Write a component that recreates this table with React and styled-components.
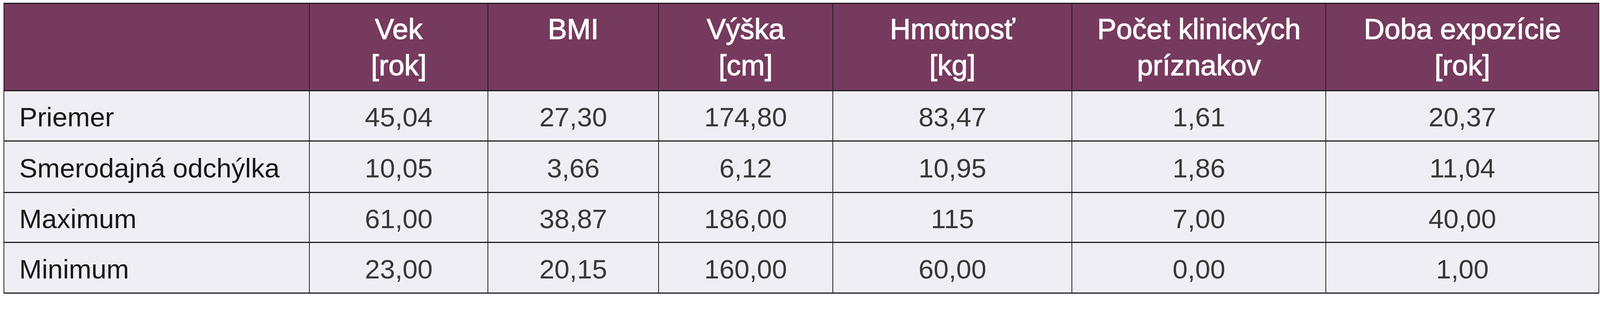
import React from 'react';
import styled, { createGlobalStyle } from 'styled-components';

// sizes are measured on a 4253px wide page; keep them relative to the viewport width
const u = (px) => `${((px / 4253) * 100).toFixed(4)}vw`;

const GlobalStyle = createGlobalStyle`
  body {
    margin: 0;
    background: #ffffff;
    font-family: "Liberation Sans", Arial, sans-serif;
    overflow: hidden;
  }
`;

const Page = styled.div`
  padding: ${u(7)} ${u(2)} 0 ${u(9)};
`;

const Table = styled.table`
  width: 100%;
  table-layout: fixed;
  border-collapse: collapse;
  border-top: ${u(4)} solid #231f20;
  border-bottom: ${u(4)} solid #231f20;
  border-left: ${u(3)} solid #231f20;
  border-right: ${u(3)} solid #231f20;
`;

const HeadRow = styled.tr`
  height: ${u(233)};
  background: #763a5e;
`;

const BodyRow = styled.tr`
  height: ${(p) => u(p.$h)};
  background: #efeef5;
`;

const HeadCell = styled.th`
  vertical-align: top;
  padding: ${u(20)} ${u(6)} 0;
  border-left: ${u(3)} solid #231f20;
  border-bottom: ${u(4)} solid #231f20;
  color: #ffffff;
  font-size: ${u(76)};
  line-height: ${u(97)};
  font-weight: 400;
  -webkit-text-stroke: ${u(1.5)} #ffffff;
  text-align: center;
  white-space: nowrap;
`;

const LabelCell = styled.td`
  padding: ${u(6)} 0 0 ${u(40)};
  border-bottom: ${u(4)} solid #231f20;
  font-size: ${u(72)};
  color: #1a1718;
  text-align: left;
  white-space: nowrap;
`;

const ValueCell = styled.td`
  padding: ${u(6)} 0 0;
  border-left: ${u(3)} solid #231f20;
  border-bottom: ${u(4)} solid #231f20;
  font-size: ${u(72)};
  color: #3a3738;
  text-align: center;
  white-space: nowrap;
`;

const widths = [813, 475, 453, 464, 636, 675, 726];
const total = widths.reduce((a, b) => a + b, 0);

const headers = [
  ['Vek', '[rok]'],
  ['BMI'],
  ['Výška', '[cm]'],
  ['Hmotnosť', '[kg]'],
  ['Počet klinických', 'príznakov'],
  ['Doba expozície', '[rok]'],
];

const rows = [
  { label: 'Priemer', h: 134, values: ['45,04', '27,30', '174,80', '83,47', '1,61', '20,37'] },
  { label: 'Smerodajná odchýlka', h: 137, values: ['10,05', '3,66', '6,12', '10,95', '1,86', '11,04'] },
  { label: 'Maximum', h: 133, values: ['61,00', '38,87', '186,00', '115', '7,00', '40,00'] },
  { label: 'Minimum', h: 135, values: ['23,00', '20,15', '160,00', '60,00', '0,00', '1,00'] },
];

const App = () => (
  <Page>
    <GlobalStyle />
    <Table>
      <colgroup>
        {widths.map((w, i) => (
          <col key={i} style={{ width: `${(w / total) * 100}%` }} />
        ))}
      </colgroup>
      <thead>
        <HeadRow>
          <HeadCell />
          {headers.map((lines, i) => (
            <HeadCell key={i}>
              {lines.map((l, j) => (
                <div key={j}>{l}</div>
              ))}
            </HeadCell>
          ))}
        </HeadRow>
      </thead>
      <tbody>
        {rows.map((r) => (
          <BodyRow key={r.label} $h={r.h}>
            <LabelCell>{r.label}</LabelCell>
            {r.values.map((v, i) => (
              <ValueCell key={i}>{v}</ValueCell>
            ))}
          </BodyRow>
        ))}
      </tbody>
    </Table>
  </Page>
);

export default App;
